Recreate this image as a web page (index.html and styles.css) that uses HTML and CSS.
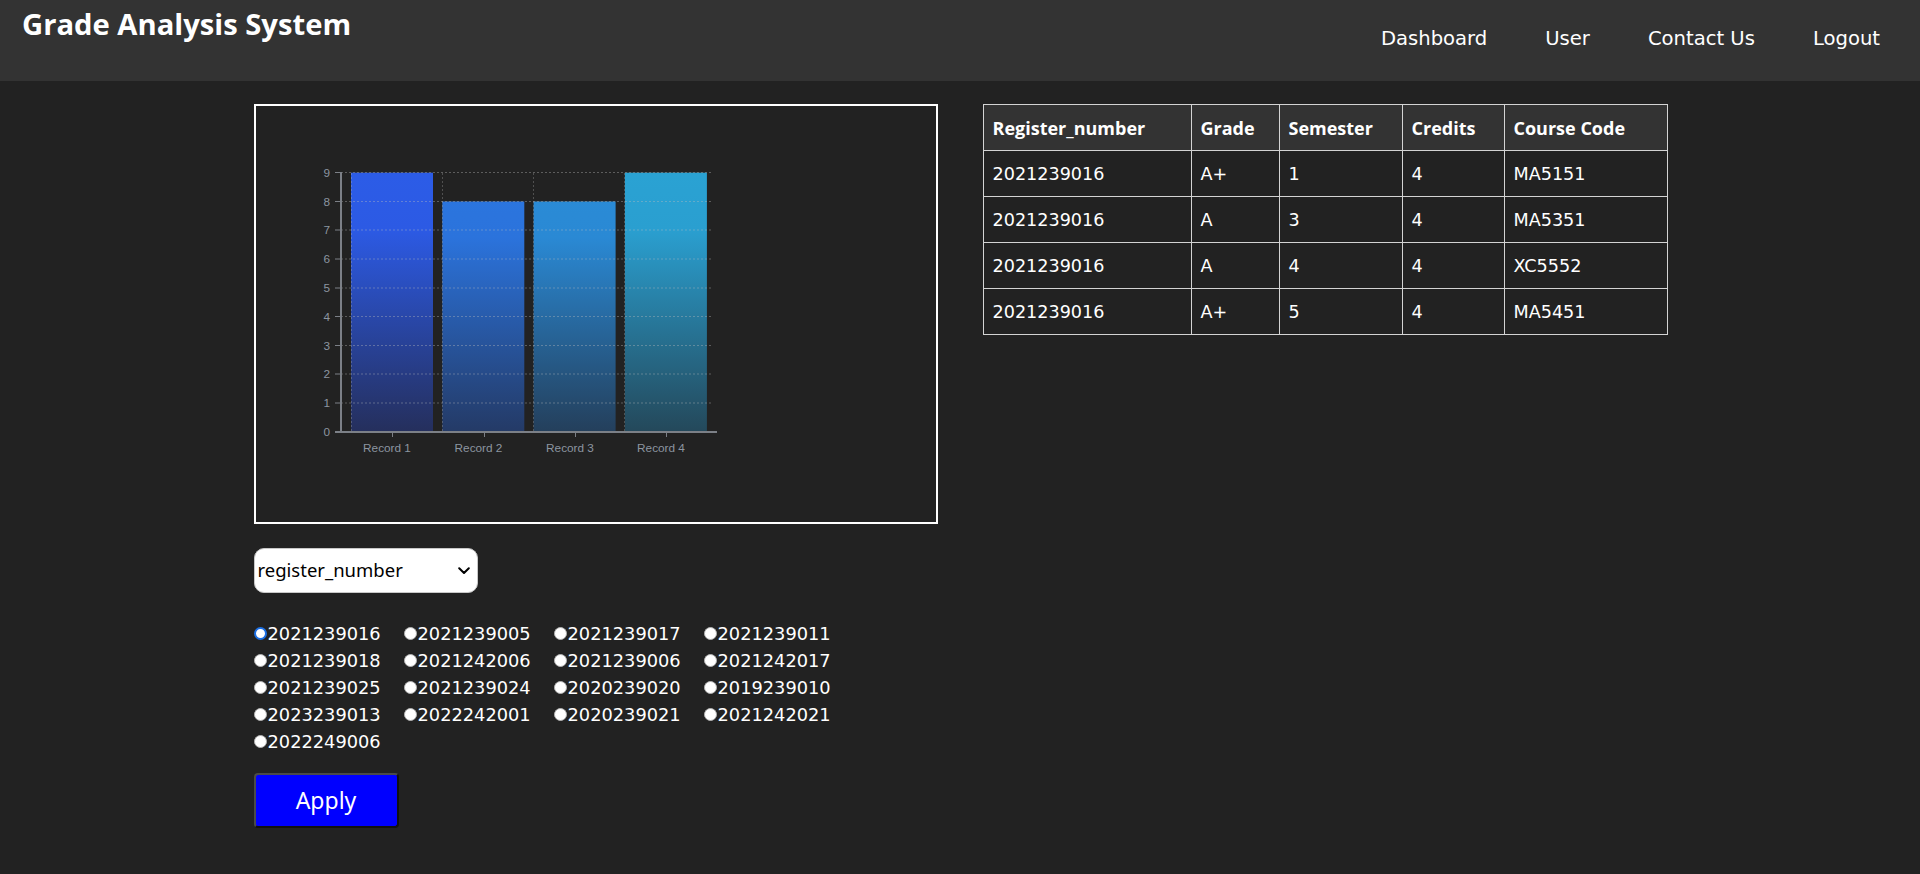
FILE: index.html
```html
<!DOCTYPE html>
<html lang="en">
<head>
<meta charset="utf-8">
<title>Grade Analysis System</title>
<link rel="stylesheet" href="styles.css">
</head>
<body>
<header class="topbar">
  <h1 class="brand">Grade Analysis System</h1>
  <nav class="nav">
    <a class="nav-link" href="#">Dashboard</a>
    <a class="nav-link" href="#">User</a>
    <a class="nav-link" href="#">Contact Us</a>
    <a class="nav-link" href="#">Logout</a>
  </nav>
</header>

<main class="content">
  <section class="left-col">
    <div class="chart-box">
      <svg class="chart" width="680" height="416" viewBox="256 106 680 416" xmlns="http://www.w3.org/2000/svg">
        <defs>
          <linearGradient id="g1" gradientUnits="userSpaceOnUse" x1="0" y1="173" x2="0" y2="432">
            <stop offset="0" stop-color="#2c5ce7"/><stop offset="0.22" stop-color="#2c5ae4"/><stop offset="1" stop-color="#252f5c"/>
          </linearGradient>
          <linearGradient id="g2" gradientUnits="userSpaceOnUse" x1="0" y1="173" x2="0" y2="432">
            <stop offset="0" stop-color="#2b76df"/><stop offset="0.25" stop-color="#2b73dc"/><stop offset="1" stop-color="#243a66"/>
          </linearGradient>
          <linearGradient id="g3" gradientUnits="userSpaceOnUse" x1="0" y1="173" x2="0" y2="432">
            <stop offset="0" stop-color="#2a8cd7"/><stop offset="0.25" stop-color="#2a89d4"/><stop offset="1" stop-color="#243f5b"/>
          </linearGradient>
          <linearGradient id="g4" gradientUnits="userSpaceOnUse" x1="0" y1="173" x2="0" y2="432">
            <stop offset="0" stop-color="#2aa2d3"/><stop offset="0.22" stop-color="#2a9fd0"/><stop offset="1" stop-color="#24485a"/>
          </linearGradient>
        </defs>

        <rect x="351" y="172.7" width="82" height="259" fill="url(#g1)"/>
        <rect x="442.3" y="201.5" width="82" height="230.2" fill="url(#g2)"/>
        <rect x="533.6" y="201.5" width="82" height="230.2" fill="url(#g3)"/>
        <rect x="624.9" y="172.7" width="82" height="259" fill="url(#g4)"/>

        <g class="grid">
          <line x1="341" y1="403" x2="713" y2="403"/>
          <line x1="341" y1="374" x2="713" y2="374"/>
          <line x1="341" y1="345.5" x2="713" y2="345.5"/>
          <line x1="341" y1="316.5" x2="713" y2="316.5"/>
          <line x1="341" y1="288" x2="713" y2="288"/>
          <line x1="341" y1="259" x2="713" y2="259"/>
          <line x1="341" y1="230" x2="713" y2="230"/>
          <line x1="341" y1="201.5" x2="713" y2="201.5"/>
          <line x1="341" y1="172.5" x2="713" y2="172.5"/>
        </g>
        <g class="grid grid-v">
          <line x1="351.5" y1="173" x2="351.5" y2="431"/>
          <line x1="442.5" y1="173" x2="442.5" y2="431"/>
          <line x1="533.5" y1="173" x2="533.5" y2="431"/>
          <line x1="624.5" y1="173" x2="624.5" y2="431"/>
        </g>

        <g class="axis">
          <line x1="341" y1="172" x2="341" y2="432"/>
          <line x1="335" y1="432" x2="717" y2="432"/>
        </g>
        <g class="ticks">
          <line x1="335" y1="403" x2="341" y2="403"/>
          <line x1="335" y1="374" x2="341" y2="374"/>
          <line x1="335" y1="345.5" x2="341" y2="345.5"/>
          <line x1="335" y1="316.5" x2="341" y2="316.5"/>
          <line x1="335" y1="288" x2="341" y2="288"/>
          <line x1="335" y1="259" x2="341" y2="259"/>
          <line x1="335" y1="230" x2="341" y2="230"/>
          <line x1="335" y1="201.5" x2="341" y2="201.5"/>
          <line x1="335" y1="172.5" x2="341" y2="172.5"/>
          <line x1="392.5" y1="432" x2="392.5" y2="437"/>
          <line x1="484.5" y1="432" x2="484.5" y2="437"/>
          <line x1="575.5" y1="432" x2="575.5" y2="437"/>
          <line x1="666.5" y1="432" x2="666.5" y2="437"/>
        </g>
        <g class="labels">
          <text x="330" y="436" text-anchor="end">0</text>
          <text x="330" y="407" text-anchor="end">1</text>
          <text x="330" y="378" text-anchor="end">2</text>
          <text x="330" y="349.5" text-anchor="end">3</text>
          <text x="330" y="320.5" text-anchor="end">4</text>
          <text x="330" y="292" text-anchor="end">5</text>
          <text x="330" y="263" text-anchor="end">6</text>
          <text x="330" y="234" text-anchor="end">7</text>
          <text x="330" y="205.5" text-anchor="end">8</text>
          <text x="330" y="176.5" text-anchor="end">9</text>
          <text x="387" y="451.5" text-anchor="middle">Record 1</text>
          <text x="478.5" y="451.5" text-anchor="middle">Record 2</text>
          <text x="570" y="451.5" text-anchor="middle">Record 3</text>
          <text x="661" y="451.5" text-anchor="middle">Record 4</text>
        </g>
      </svg>
    </div>

    <div class="select-wrap">
      <select class="field-select">
        <option>register_number</option>
      </select>
      <svg class="chevron" width="12" height="8" viewBox="0 0 12 8" xmlns="http://www.w3.org/2000/svg"><path d="M1.2 1.2 L6 6 L10.8 1.2" fill="none" stroke="#000" stroke-width="2" stroke-linecap="round" stroke-linejoin="round"/></svg>
    </div>

    <div class="radios">
      <label class="radio-item"><input type="radio" name="reg" checked>2021239016</label>
      <label class="radio-item"><input type="radio" name="reg">2021239005</label>
      <label class="radio-item"><input type="radio" name="reg">2021239017</label>
      <label class="radio-item"><input type="radio" name="reg">2021239011</label>
      <label class="radio-item"><input type="radio" name="reg">2021239018</label>
      <label class="radio-item"><input type="radio" name="reg">2021242006</label>
      <label class="radio-item"><input type="radio" name="reg">2021239006</label>
      <label class="radio-item"><input type="radio" name="reg">2021242017</label>
      <label class="radio-item"><input type="radio" name="reg">2021239025</label>
      <label class="radio-item"><input type="radio" name="reg">2021239024</label>
      <label class="radio-item"><input type="radio" name="reg">2020239020</label>
      <label class="radio-item"><input type="radio" name="reg">2019239010</label>
      <label class="radio-item"><input type="radio" name="reg">2023239013</label>
      <label class="radio-item"><input type="radio" name="reg">2022242001</label>
      <label class="radio-item"><input type="radio" name="reg">2020239021</label>
      <label class="radio-item"><input type="radio" name="reg">2021242021</label>
      <label class="radio-item"><input type="radio" name="reg">2022249006</label>
    </div>

    <button class="apply-btn" type="button">Apply</button>
  </section>

  <section class="right-col">
    <table class="grades">
      <colgroup>
        <col class="c-reg"><col class="c-grade"><col class="c-sem"><col class="c-cred"><col class="c-code">
      </colgroup>
      <thead>
        <tr><th>Register_number</th><th>Grade</th><th>Semester</th><th>Credits</th><th>Course Code</th></tr>
      </thead>
      <tbody>
        <tr><td>2021239016</td><td>A+</td><td>1</td><td>4</td><td>MA5151</td></tr>
        <tr><td>2021239016</td><td>A</td><td>3</td><td>4</td><td>MA5351</td></tr>
        <tr><td>2021239016</td><td>A</td><td>4</td><td>4</td><td>XC5552</td></tr>
        <tr><td>2021239016</td><td>A+</td><td>5</td><td>4</td><td>MA5451</td></tr>
      </tbody>
    </table>
  </section>
</main>
</body>
</html>
```

FILE: styles.css
```css
* { box-sizing: border-box; }

html, body {
  margin: 0;
  padding: 0;
}

body {
  background: #222222;
  color: #ffffff;
  font-family: "DejaVu Sans", "Liberation Sans", sans-serif;
  min-height: 874px;
}

.topbar {
  height: 81px;
  background: #333333;
  display: flex;
  justify-content: space-between;
  align-items: flex-start;
}

.brand {
  margin: 0;
  padding: 5px 0 0 22px;
  font-family: "Open Sans", "DejaVu Sans", sans-serif;
  font-weight: 700;
  font-size: 29.2px;
  line-height: 38px;
  color: #ffffff;
}

.nav {
  display: flex;
  gap: 58px;
  padding: 28px 40px 0 0;
}

.nav-link {
  color: #ffffff;
  text-decoration: none;
  font-size: 19.6px;
  line-height: 22px;
}

.content {
  width: 1413px;
  margin: 23px auto 0;
  display: flex;
  gap: 45px;
  align-items: flex-start;
}

.left-col {
  width: 684px;
  display: flex;
  flex-direction: column;
  align-items: flex-start;
}

.chart-box {
  width: 684px;
  height: 420px;
  border: 2px solid #ffffff;
  background: #222222;
}

.chart {
  display: block;
}

.grid line {
  stroke: rgba(190, 190, 190, 0.38);
  stroke-width: 1;
  stroke-dasharray: 2 2;
}

.grid-v line {
  stroke: rgba(190, 190, 190, 0.3);
}

.axis line {
  stroke: #7c8087;
  stroke-width: 2;
}

.ticks line {
  stroke: #7c8087;
  stroke-width: 1;
}

.labels text {
  font-family: "Liberation Sans", Arial, sans-serif;
  font-size: 11.8px;
  fill: #8c95a0;
}

.select-wrap {
  position: relative;
  margin-top: 24px;
  width: 224px;
  height: 45px;
}

.field-select {
  appearance: none;
  -webkit-appearance: none;
  width: 224px;
  height: 45px;
  border: 1px solid #c8c8c8;
  border-radius: 10px;
  background: #ffffff;
  color: #000000;
  font-family: "Noto Sans", "Open Sans", sans-serif;
  font-size: 18.5px;
  padding: 0 0 2px 3px;
  margin: 0;
}

.chevron {
  position: absolute;
  left: 204px;
  top: 19px;
  pointer-events: none;
}

.radios {
  margin-top: 27px;
  display: grid;
  grid-template-columns: repeat(4, 150px);
  width: 684px;
}

.radio-item {
  display: flex;
  align-items: center;
  height: 27px;
  font-size: 17.8px;
  color: #ffffff;
}

.radio-item input {
  appearance: none;
  -webkit-appearance: none;
  width: 13px;
  height: 13px;
  margin: 0 1px 0 0;
  border-radius: 50%;
  background: #ffffff;
  border: 1px solid #b5b5b5;
  flex: none;
}

.radio-item input:checked {
  border: 2.5px solid #1c6fe3;
  background: #ffffff;
}

.apply-btn {
  margin-top: 18px;
  width: 145px;
  height: 55px;
  background: #0000ff;
  color: #ffffff;
  border: 2px solid;
  border-color: #4a4a4a #111111 #111111 #4a4a4a;
  border-radius: 4px;
  font-family: "Noto Sans", "Open Sans", sans-serif;
  font-size: 23px;
  padding: 0 0 2px 0;
}

.right-col {
  width: 684px;
}

.grades {
  border-collapse: collapse;
  table-layout: fixed;
  width: 684px;
}

.c-reg { width: 208px; }
.c-grade { width: 88px; }
.c-sem { width: 123px; }
.c-cred { width: 102px; }
.c-code { width: 163px; }

.grades th,
.grades td {
  border: 1px solid #d4d4d4;
  height: 46px;
  padding: 0 9px;
  text-align: left;
  vertical-align: middle;
  white-space: nowrap;
}

.grades th {
  background: #333333;
  font-family: "Open Sans", "DejaVu Sans", sans-serif;
  font-weight: 700;
  font-size: 18px;
}

.grades td {
  background: #222222;
  font-size: 17.6px;
}
```
